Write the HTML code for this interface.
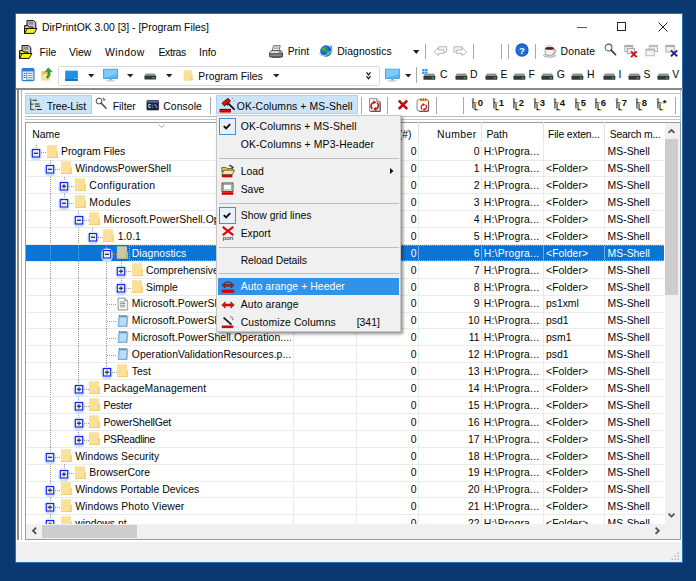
<!DOCTYPE html>
<html><head><meta charset="utf-8"><title>DirPrintOK 3.00 [3] - [Program Files]</title>
<style>
html,body{margin:0;padding:0}
body{width:696px;height:581px;overflow:hidden;background:#0a3871;position:relative;font-family:"Liberation Sans",sans-serif;font-size:10.4px;color:#050505}
.b{position:absolute;box-sizing:border-box}
.t{position:absolute;white-space:nowrap;line-height:16px;height:16px}
.w{color:#fff}
.sep{background:#a8a8a8;width:1px}
svg{overflow:visible}
</style></head><body>

<div class="b " style="left:15.0px;top:13.0px;width:668.4px;height:550.0px;background:#fff;border:1px solid #2f6fb3;"></div>
<svg class="b" style="left:23.8px;top:20.0px;" width="13.5" height="14.0" viewBox="0 0 13.500 14"><path d="M3 .600h6.600l2.200 2v6H3z" fill="#c6c6c6" stroke="#111" stroke-width="1"/><rect x="4.600" y="1.800" width="4.600" height="2.800" fill="#8c8c8c"/><path d="M.600 13.300V5.600h3.400l1 1.400h3.800v1.600H.600z" fill="#e2dc00" stroke="#111" stroke-width="1" stroke-linejoin="round"/><path d="M.600 13.400l2.700-4.900h9.600l-2.700 4.900z" fill="#fbf500" stroke="#111" stroke-width="1" stroke-linejoin="round"/></svg>
<span class="t " style="left:42.0px;top:20.2px;">DirPrintOK 3.00 [3] - [Program Files]</span>
<div class="b " style="left:577.0px;top:26.6px;width:9.5px;height:1.0px;background:#555"></div>
<div class="b " style="left:617.4px;top:22.0px;width:9.0px;height:9.0px;border:1px solid #222"></div>
<svg class="b" style="left:657.5px;top:21.5px;" width="10.0" height="10.0" viewBox="0 0 10 10"><path d="M.5.5l9 9M9.5.5l-9 9" stroke="#222" stroke-width="1"/></svg>
<svg class="b" style="left:18.6px;top:44.8px;" width="13.5" height="14.0" viewBox="0 0 13.500 14"><path d="M3 .600h6.600l2.200 2v6H3z" fill="#c6c6c6" stroke="#111" stroke-width="1"/><rect x="4.600" y="1.800" width="4.600" height="2.800" fill="#8c8c8c"/><path d="M.600 13.300V5.600h3.400l1 1.400h3.800v1.600H.600z" fill="#e2dc00" stroke="#111" stroke-width="1" stroke-linejoin="round"/><path d="M.600 13.400l2.700-4.900h9.600l-2.700 4.900z" fill="#fbf500" stroke="#111" stroke-width="1" stroke-linejoin="round"/></svg>
<span class="t " style="left:39.5px;top:44.7px;">File</span>
<span class="t " style="left:69.0px;top:44.7px;">View</span>
<span class="t " style="left:105.0px;top:44.7px;letter-spacing:0.45px;">Window</span>
<span class="t " style="left:158.5px;top:44.7px;letter-spacing:-0.35px;">Extras</span>
<span class="t " style="left:199.0px;top:44.7px;">Info</span>
<svg class="b" style="left:269.4px;top:44.5px;" width="14.0" height="14.0" viewBox="0 0 16 16"><path d="M5.200 .800h7.600l-1.400 5.600H3.800z" fill="#fff" stroke="#444" stroke-width=".900"/><path d="M6 2.400h5M5.600 4h5" stroke="#777" stroke-width=".800"/><path d="M2.600 6.400h11.200l1.600 2.400v2H.800v-2z" fill="#e4e4e4" stroke="#333" stroke-width=".900"/><path d="M.800 10h14.600v3.600H.800z" fill="#8a8a8a" stroke="#222" stroke-width=".900"/><path d="M3 13.600h10.500v1.200H3z" fill="#555"/><path d="M11 8.300h3" stroke="#444" stroke-width="1"/></svg>
<span class="t " style="left:287.7px;top:43.6px;">Print</span>
<svg class="b" style="left:319.4px;top:44.0px;" width="14.0" height="14.0" viewBox="0 0 16 16"><ellipse cx="8" cy="8.500" rx="7.800" ry="3" fill="none" stroke="#8fc4f5" stroke-width="1" transform="rotate(-25 8 8.500)"/><circle cx="8" cy="8" r="6.600" fill="#1a62c4"/><circle cx="6.600" cy="6.400" r="4" fill="#2a7be0" opacity=".700"/><path d="M3.200 4.600c1.800-1.800 3.800-1 4.800.4s-1 3-2.400 3S2.400 6 3.200 4.600zM9 8c2-1 3.800 0 3.800 1.800S11 13.400 9.600 12.600 8 9 9 8z" fill="#3fae3c"/><path d="M1 11.500Q8 16.500 15 7" stroke="#a8d4fa" stroke-width="1.100" fill="none"/><path d="M12.500 1.200l2.700 1.500-1 2.600z" fill="#3a86e8"/></svg>
<span class="t " style="left:337.3px;top:43.6px;letter-spacing:0.07px;">Diagnostics</span>
<svg class="b" style="left:413.0px;top:49.5px;" width="6.5" height="4.0" viewBox="0 0 8 5"><path d="M0 0h8L4 5z" fill="#222"/></svg>
<div class="b sep" style="left:425.0px;top:43.5px;width:1.0px;height:15.0px;"></div>
<div class="b sep" style="left:473.0px;top:43.5px;width:1.0px;height:15.0px;"></div>
<div class="b sep" style="left:500.6px;top:43.5px;width:1.0px;height:15.0px;"></div>
<div class="b sep" style="left:507.5px;top:43.5px;width:1.0px;height:15.0px;"></div>
<div class="b sep" style="left:534.8px;top:43.5px;width:1.0px;height:15.0px;"></div>
<svg class="b" style="left:432.5px;top:43.5px;" width="14.5" height="14.5" viewBox="0 0 16 16"><path d="M6 3h9v6H6z" fill="#f4f4f4" stroke="#aaa" stroke-width=".9"/><path d="M1 8.5L6 4v2.6h6v3.8H6V13z" fill="#fff" stroke="#aaa" stroke-width=".9"/></svg>
<svg class="b" style="left:453.0px;top:43.5px;" width="14.5" height="14.5" viewBox="0 0 16 16"><path d="M1 3h9v6H1z" fill="#f4f4f4" stroke="#aaa" stroke-width=".9"/><path d="M15 8.5L10 4v2.6H4v3.8h6V13z" fill="#fff" stroke="#aaa" stroke-width=".9"/></svg>
<svg class="b" style="left:515.0px;top:43.4px;" width="14.0" height="14.0" viewBox="0 0 16 16"><circle cx="8" cy="8" r="7.6" fill="#0f5fc2"/><circle cx="8" cy="8" r="6.3" fill="#1a6fd8"/><text x="8" y="12" text-anchor="middle" font-family="Liberation Sans, sans-serif" font-weight="bold" font-size="11" fill="#fff">?</text></svg>
<svg class="b" style="left:542.5px;top:43.5px;" width="14.0" height="14.0" viewBox="0 0 16 16"><ellipse cx="7.5" cy="13" rx="7" ry="2.2" fill="#d9d9d9" stroke="#888" stroke-width=".6"/><path d="M2.5 5h10v4.5q0 3.5-5 3.5t-5-3.5z" fill="#f1f1f1" stroke="#777" stroke-width=".7"/><ellipse cx="7.5" cy="5" rx="5" ry="1.7" fill="#5a1a12"/><path d="M12.5 6.2q3 0 2.4 2.2T12 10.6" fill="none" stroke="#888" stroke-width="1"/><path d="M6 3q-1-1 0-2M9 3q-1-1 0-2" stroke="#a33" stroke-width=".7" fill="none"/></svg>
<span class="t " style="left:560.6px;top:43.6px;letter-spacing:0.20px;">Donate</span>
<svg class="b" style="left:604.0px;top:42.5px;" width="13.0" height="13.0" viewBox="0 0 16 16"><circle cx="5.6" cy="5.6" r="4.2" fill="#fff" stroke="#555" stroke-width="1.3"/><path d="M8.8 8.8l5.4 5.4" stroke="#444" stroke-width="2.2" stroke-linecap="round"/></svg>
<svg class="b" style="left:624.0px;top:43.5px;" width="14.0" height="14.0" viewBox="0 0 16 16"><rect x="1" y="1.5" width="9" height="7" fill="#eee" stroke="#999" stroke-width=".9"/><rect x="1" y="1.5" width="9" height="2" fill="#aaa"/><rect x="4" y="5" width="8" height="6" fill="#eee" stroke="#999" stroke-width=".9"/><path d="M8 8.5l6.5 6.5M14.5 8.5L8 15" stroke="#d01010" stroke-width="2.2"/></svg>
<svg class="b" style="left:645.0px;top:43.5px;" width="13.5" height="13.5" viewBox="0 0 16 16"><rect x="5" y="1.5" width="10" height="7.5" fill="#eee" stroke="#a5a5a5" stroke-width=".9"/><rect x="5" y="1.5" width="10" height="2" fill="#bbb"/><rect x="1" y="6" width="10" height="8" fill="#f3f3f3" stroke="#a5a5a5" stroke-width=".9"/><rect x="1" y="6" width="10" height="2" fill="#bbb"/></svg>
<svg class="b" style="left:665.0px;top:43.5px;" width="13.5" height="13.5" viewBox="0 0 16 16"><rect x="1" y="1.5" width="10" height="8" fill="#eee" stroke="#999" stroke-width=".9"/><rect x="1" y="1.5" width="10" height="2" fill="#aaa"/><path d="M7 7.5l7.5 7M14.5 7.5L7 14.5" stroke="#2a1a8a" stroke-width="2.2"/></svg>
<svg class="b" style="left:21.0px;top:68.0px;" width="14.0" height="13.2" viewBox="0 0 16 16"><rect x=".800" y=".800" width="14.400" height="14.400" rx="1.600" fill="#fff" stroke="#2b7cd3" stroke-width="1.500"/><rect x=".800" y=".800" width="14.400" height="3.400" rx="1" fill="#2b7cd3"/><path d="M6.600 4v11" stroke="#2b7cd3" stroke-width="1.100"/><path d="M2.600 6.500h2.600M2.600 9h2.600M2.600 11.500h2.600" stroke="#555" stroke-width="1.200"/><path d="M8.200 6.500h5.400M8.200 9h5.400M8.200 11.500h5.400" stroke="#8a8a8a" stroke-width="1.300"/><path d="M8.200 13.600h5.400" stroke="#4a90dc" stroke-width="1"/></svg>
<svg class="b" style="left:41.2px;top:67.3px;" width="12.5" height="14.2" viewBox="0 0 16 16"><path d="M.800 4.500h5.500l1 1.400h4.200V16H.800z" fill="#e8c050"/><path d="M.800 16l1.400-8h10.600l-1.300 8z" fill="#f6dc8c"/><path d="M3.500 9.500h4M3.300 11.500h4M3 13.500h4" stroke="#fff" stroke-width=".800"/><path d="M9.200 0l5.200 5h-2.800q.800 5-3 8.500l-1.800-1.600q3-3 2.200-6.900H5.400z" fill="#27a838" stroke="#177026" stroke-width=".600"/></svg>
<div class="b " style="left:58.3px;top:66.0px;width:322.0px;height:19.5px;border:1px solid #d9d9d9;border-radius:2px;background:#fff"></div>
<svg class="b" style="left:64.3px;top:68.5px;" width="15.0" height="13.5" viewBox="0 0 16 16"><rect x=".5" y="2" width="15" height="12" fill="#1e8fea"/><rect x=".5" y="12.2" width="15" height="1.8" fill="#1565b0"/><rect x="11" y="10.6" width="3" height="1.2" fill="#7fc4ff"/></svg>
<svg class="b" style="left:87.6px;top:74.0px;" width="6.5" height="3.6" viewBox="0 0 8 4.500"><path d="M0 0h8L4 4.500z" fill="#222"/></svg>
<svg class="b" style="left:103.3px;top:67.5px;" width="15.0" height="15.0" viewBox="0 0 16 16"><rect x=".7" y="1.2" width="14.6" height="10" fill="#57b6f5" stroke="#2a8ad4" stroke-width=".8"/><path d="M1.2 1.6h13.6v5L1.2 10.6z" fill="#7ccaf9"/><rect x="6.7" y="11.2" width="2.6" height="2" fill="#9aa4ad"/><rect x="3.5" y="13.2" width="9" height="1.1" fill="#b7bec5"/></svg>
<svg class="b" style="left:126.7px;top:74.0px;" width="6.5" height="3.6" viewBox="0 0 8 4.500"><path d="M0 0h8L4 4.500z" fill="#222"/></svg>
<svg class="b" style="left:144.0px;top:67.5px;" width="12.5" height="12.5" viewBox="0 0 16 16"><path d="M2.4 6.6h11.2l1.8 3.6H.6z" fill="#b9bcc0"/><path d="M2 7.6h12l1.4 2.6H.6z" fill="#8d9196"/><rect x=".6" y="10" width="14.8" height="4.6" rx=".6" fill="#34373b"/><rect x="11" y="11.8" width="2.4" height="1.4" fill="#3fe052"/></svg>
<svg class="b" style="left:166.0px;top:74.0px;" width="6.5" height="3.6" viewBox="0 0 8 4.500"><path d="M0 0h8L4 4.500z" fill="#222"/></svg>
<svg class="b" style="left:183.2px;top:68.0px;" width="11.8" height="14.4" viewBox="0 0 16 16"><path d="M1 1.2h10.2q.8 0 .8.8V15H1z" fill="#fbe09a"/><path d="M10.6 8.6l2.6-1.6V15h-2.6z" fill="#f6d67e"/><path d="M1 14.2h12.2V15H1z" fill="#f0c968"/></svg>
<span class="t " style="left:198.3px;top:68.6px;letter-spacing:-0.03px;">Program Files</span>
<svg class="b" style="left:273.3px;top:74.0px;" width="6.5" height="3.6" viewBox="0 0 8 4.500"><path d="M0 0h8L4 4.500z" fill="#222"/></svg>
<svg class="b" style="left:366.4px;top:72.0px;" width="5.0" height="7.6" viewBox="0 0 6 9"><path d="M.5.500L3 3.500 5.500.500M.500 5L3 8 5.500 5" fill="none" stroke="#222" stroke-width="1.500"/></svg>
<svg class="b" style="left:384.7px;top:67.5px;" width="15.0" height="15.0" viewBox="0 0 16 16"><rect x=".7" y="1.2" width="14.6" height="10" fill="#57b6f5" stroke="#2a8ad4" stroke-width=".8"/><path d="M1.2 1.6h13.6v5L1.2 10.6z" fill="#7ccaf9"/><rect x="6.7" y="11.2" width="2.6" height="2" fill="#9aa4ad"/><rect x="3.5" y="13.2" width="9" height="1.1" fill="#b7bec5"/></svg>
<svg class="b" style="left:404.5px;top:74.0px;" width="6.5" height="3.6" viewBox="0 0 8 4.500"><path d="M0 0h8L4 4.500z" fill="#222"/></svg>
<div class="b sep" style="left:416.3px;top:67.0px;width:1.0px;height:16.0px;"></div>
<svg class="b" style="left:423.0px;top:68.3px;" width="12.8" height="12.8" viewBox="0 0 16 16"><path d="M-.8 1.4h2.8v2.6H-.8zM2.8 1.4h2.8v2.6H2.800zM-.8 4.800h2.800v2.600H-.800zM2.800 4.800h2.800v2.600H2.800z" fill="#1e90ff"/><path d="M2.4 6.6h11.2l1.8 3.6H.6z" fill="#b9bcc0"/><path d="M2 7.6h12l1.4 2.6H.6z" fill="#8d9196"/><rect x=".6" y="10" width="14.8" height="4.6" rx=".6" fill="#34373b"/><rect x="11" y="11.8" width="2.4" height="1.4" fill="#3fe052"/></svg>
<span class="t " style="left:440.0px;top:66.8px;">C</span>
<svg class="b" style="left:454.6px;top:68.3px;" width="12.8" height="12.8" viewBox="0 0 16 16"><path d="M2.4 6.6h11.2l1.8 3.6H.6z" fill="#b9bcc0"/><path d="M2 7.6h12l1.4 2.6H.6z" fill="#8d9196"/><rect x=".6" y="10" width="14.8" height="4.6" rx=".6" fill="#34373b"/><rect x="11" y="11.8" width="2.4" height="1.4" fill="#3fe052"/></svg>
<span class="t " style="left:470.0px;top:66.8px;">D</span>
<svg class="b" style="left:484.8px;top:68.3px;" width="12.8" height="12.8" viewBox="0 0 16 16"><path d="M2.4 6.6h11.2l1.8 3.6H.6z" fill="#b9bcc0"/><path d="M2 7.6h12l1.4 2.6H.6z" fill="#8d9196"/><rect x=".6" y="10" width="14.8" height="4.6" rx=".6" fill="#34373b"/><rect x="11" y="11.8" width="2.4" height="1.4" fill="#3fe052"/></svg>
<span class="t " style="left:500.6px;top:66.8px;">E</span>
<svg class="b" style="left:512.8px;top:68.3px;" width="12.8" height="12.8" viewBox="0 0 16 16"><path d="M2.4 6.6h11.2l1.8 3.6H.6z" fill="#b9bcc0"/><path d="M2 7.6h12l1.4 2.6H.6z" fill="#8d9196"/><rect x=".6" y="10" width="14.8" height="4.6" rx=".6" fill="#34373b"/><rect x="11" y="11.8" width="2.4" height="1.4" fill="#3fe052"/></svg>
<span class="t " style="left:528.6px;top:66.8px;">F</span>
<svg class="b" style="left:541.0px;top:68.3px;" width="12.8" height="12.8" viewBox="0 0 16 16"><path d="M2.4 6.6h11.2l1.8 3.6H.6z" fill="#b9bcc0"/><path d="M2 7.6h12l1.4 2.6H.6z" fill="#8d9196"/><rect x=".6" y="10" width="14.8" height="4.6" rx=".6" fill="#34373b"/><rect x="11" y="11.8" width="2.4" height="1.4" fill="#3fe052"/></svg>
<span class="t " style="left:556.8px;top:66.8px;">G</span>
<svg class="b" style="left:571.3px;top:68.3px;" width="12.8" height="12.8" viewBox="0 0 16 16"><path d="M2.4 6.6h11.2l1.8 3.6H.6z" fill="#b9bcc0"/><path d="M2 7.6h12l1.4 2.6H.6z" fill="#8d9196"/><rect x=".6" y="10" width="14.8" height="4.6" rx=".6" fill="#34373b"/><rect x="11" y="11.8" width="2.4" height="1.4" fill="#3fe052"/></svg>
<span class="t " style="left:587.0px;top:66.8px;">H</span>
<svg class="b" style="left:602.7px;top:68.3px;" width="12.8" height="12.8" viewBox="0 0 16 16"><path d="M2.4 6.6h11.2l1.8 3.6H.6z" fill="#b9bcc0"/><path d="M2 7.6h12l1.4 2.6H.6z" fill="#8d9196"/><rect x=".6" y="10" width="14.8" height="4.6" rx=".6" fill="#34373b"/><rect x="11" y="11.8" width="2.4" height="1.4" fill="#3fe052"/></svg>
<span class="t " style="left:618.5px;top:66.8px;">I</span>
<svg class="b" style="left:628.0px;top:68.3px;" width="12.8" height="12.8" viewBox="0 0 16 16"><path d="M2.4 6.6h11.2l1.8 3.6H.6z" fill="#b9bcc0"/><path d="M2 7.6h12l1.4 2.6H.6z" fill="#8d9196"/><rect x=".6" y="10" width="14.8" height="4.6" rx=".6" fill="#34373b"/><rect x="11" y="11.8" width="2.4" height="1.4" fill="#3fe052"/></svg>
<span class="t " style="left:643.6px;top:66.8px;">S</span>
<svg class="b" style="left:656.5px;top:68.3px;" width="12.8" height="12.8" viewBox="0 0 16 16"><path d="M2.4 6.6h11.2l1.8 3.6H.6z" fill="#b9bcc0"/><path d="M2 7.6h12l1.4 2.6H.6z" fill="#8d9196"/><rect x=".6" y="10" width="14.8" height="4.6" rx=".6" fill="#34373b"/><rect x="11" y="11.8" width="2.4" height="1.4" fill="#3fe052"/></svg>
<span class="t " style="left:672.3px;top:66.8px;">V</span>
<div class="b " style="left:16.0px;top:87.5px;width:666.0px;height:454.0px;background:#fff"></div>
<div class="b " style="left:16.0px;top:88.4px;width:666.5px;height:1.9px;background:#8a8a8a"></div>
<div class="b " style="left:17.3px;top:90.0px;width:1.3px;height:450.0px;background:#8c8c8c"></div>
<div class="b " style="left:20.8px;top:90.3px;width:1.2px;height:449.7px;background:#b4b4b4"></div>
<div class="b " style="left:680.3px;top:90.3px;width:1.0px;height:450.0px;background:#c2c2c2"></div>
<div class="b " style="left:25.0px;top:92.7px;width:655.5px;height:1.0px;background:#c4c4c4"></div>
<div class="b " style="left:25.0px;top:115.9px;width:655.5px;height:1.0px;background:#b8b8b8"></div>
<div class="b " style="left:25.0px;top:118.9px;width:655.5px;height:1.0px;background:#c8c8c8"></div>
<div class="b " style="left:25.0px;top:94.6px;width:67.0px;height:19.6px;background:#cce4f7;border:1px solid #a9d1f1"></div>
<svg class="b" style="left:29.0px;top:98.0px;" width="13.5" height="13.5" viewBox="0 0 16 16"><path d="M2 1.800v12M2 7.300h3M2 13.800h3.500" stroke="#222" stroke-width="1.100" fill="none"/><path d="M4.300 2.600h5.200M7.200 7.200h5.300M7.200 9.900h6M9.300 13.700h6" stroke="#222" stroke-width="1.200"/><circle cx="2" cy="1.800" r="1.200" fill="#ddd" stroke="#333" stroke-width=".500"/><circle cx="5.600" cy="7.200" r="1.150" fill="#d8b400"/><circle cx="7.200" cy="13.600" r="1.150" fill="#d8b400"/></svg>
<span class="t " style="left:46.7px;top:99.1px;letter-spacing:-0.16px;">Tree-List</span>
<svg class="b" style="left:95.0px;top:97.0px;" width="13.0" height="13.0" viewBox="0 0 16 16"><circle cx="5" cy="5" r="3.6" fill="#fff" stroke="#444" stroke-width="1.2"/><path d="M7.6 7.6l6 6.2" stroke="#555" stroke-width="2" stroke-linecap="round"/><path d="M10.5 1l.5 3M12.5 2.5l-1.5 2" stroke="#d01010" stroke-width="1.2"/></svg>
<span class="t " style="left:112.7px;top:99.1px;">Filter</span>
<svg class="b" style="left:146.0px;top:98.5px;" width="13.5" height="12.5" viewBox="0 0 16 16"><rect x=".5" y="2" width="15" height="12" rx=".8" fill="#1b2540" stroke="#0b1020" stroke-width=".8"/><rect x=".9" y="2.4" width="14.2" height="2.2" fill="#4b6fb8"/><text x="2" y="11.6" font-family="Liberation Mono, monospace" font-weight="bold" font-size="6.5" fill="#fff">C:\</text></svg>
<span class="t " style="left:163.3px;top:99.1px;letter-spacing:0.06px;">Console</span>
<div class="b sep" style="left:210.0px;top:96.5px;width:1.0px;height:17.0px;"></div>
<div class="b " style="left:216.0px;top:94.6px;width:141.5px;height:19.6px;background:#cce4f7;border:1px solid #a9d1f1"></div>
<svg class="b" style="left:218.6px;top:97.0px;" width="16.0" height="16.0" viewBox="0 0 16 16"><path d="M10 7.200l5 5" stroke="#111" stroke-width="1.800" stroke-linecap="round"/><g transform="rotate(-38 7.500 5.500)"><rect x="3.600" y="3.200" width="7.800" height="3.800" rx=".600" fill="#d21414" stroke="#3a0505" stroke-width=".800"/><rect x="6.500" y="6.800" width="2.200" height="1.600" fill="#b01010" stroke="#3a0505" stroke-width=".600"/></g><path d="M13.200 1.800l.6-.9M14.700 4.200l1-.3" stroke="#c33" stroke-width=".700"/><rect x=".600" y="12.400" width="11.400" height="3.200" fill="#e01010"/><path d="M.600 12.400h11.400" stroke="#111" stroke-width=".900"/><path d="M.600 14.300h11.400" stroke="#500" stroke-width=".900" stroke-dasharray="1.600 1.200"/></svg>
<span class="t " style="left:236.7px;top:99.1px;letter-spacing:0.12px;">OK-Columns + MS-Shell</span>
<div class="b sep" style="left:360.7px;top:96.5px;width:1.0px;height:17.0px;"></div>
<svg class="b" style="left:368.0px;top:97.5px;" width="14.0" height="14.0" viewBox="0 0 16 16"><path d="M2.600 1.400h8.200l3.600 3.400v10.800H2.600z" fill="#222"/><path d="M1.800.800h8.200l3.600 3.400v10.600H1.800z" fill="#fff" stroke="#555" stroke-width=".800"/><path d="M10 .800v3.400h3.600" fill="#ddd" stroke="#555" stroke-width=".700"/><g transform="translate(-.300 .300)"><path d="M5.300 12C3 10 3.200 5.800 6.800 4.600" stroke="#c4200c" stroke-width="2" fill="none"/><path d="M6.200 2.200l3.800 2.400-3.600 2.600z" fill="#c4200c"/><path d="M10.700 5C13 7 12.800 11.200 9.200 12.400" stroke="#c4200c" stroke-width="2" fill="none"/><path d="M9.800 14.800L6 12.400l3.600-2.600z" fill="#c4200c"/></g></svg>
<div class="b sep" style="left:387.4px;top:96.5px;width:1.0px;height:17.0px;"></div>
<svg class="b" style="left:396.6px;top:99.0px;" width="12.0" height="11.5" viewBox="0 0 16 16"><path d="M2.300 2.300l11.400 11.400M13.700 2.300L2.300 13.700" stroke="#6a0000" stroke-width="3.400" stroke-linecap="butt"/><path d="M2.300 2.300l11.400 11.400M13.700 2.300L2.300 13.700" stroke="#e00808" stroke-width="2.400" stroke-linecap="butt"/></svg>
<svg class="b" style="left:416.0px;top:97.5px;" width="14.0" height="14.0" viewBox="0 0 16 16"><path d="M4 2.600h9q2 0 2 2v9q0 2-2 2H5q-2 0-2-2z" fill="#222"/><path d="M3.200 1.800h9q2 0 2 2v9q0 2-2 2h-9q-2 0-2-2v-9q0-2 2-2z" fill="#fff" stroke="#555" stroke-width=".800"/><path d="M3.500 .600h9v3.200h-9z" fill="#e9c53c"/><path d="M5 .800l1.800 2M9 .600l-1 2.400" stroke="#2a50c8" stroke-width="1.200"/><circle cx="11" cy="1.800" r="1" fill="#d01010"/><g transform="translate(3.200 4.200) scale(.720)"><path d="M5.300 12C3 10 3.200 5.800 6.800 4.600" stroke="#e61010" stroke-width="2" fill="none"/><path d="M6.200 2.200l3.800 2.400-3.600 2.600z" fill="#e61010"/><path d="M10.700 5C13 7 12.800 11.200 9.200 12.400" stroke="#e61010" stroke-width="2" fill="none"/><path d="M9.800 14.800L6 12.400l3.600-2.600z" fill="#e61010"/></g></svg>
<div class="b sep" style="left:435.7px;top:96.5px;width:1.0px;height:17.0px;"></div>
<div class="b sep" style="left:463.3px;top:96.5px;width:1.0px;height:17.0px;"></div>
<svg class="b" style="left:471.3px;top:98.0px;" width="14.0" height="14.0" viewBox="0 0 16 16"><path d="M2.200 1.500v10.500M2.200 5.500h3M4.600 6.500v6.800h2.400" stroke="#222" stroke-width="1.200" fill="none"/><circle cx="2.200" cy="1.500" r="1.100" fill="#ccc" stroke="#333" stroke-width=".500"/><circle cx="5.800" cy="5.600" r="1.100" fill="#d8b400"/><circle cx="7.600" cy="13.400" r="1.100" fill="#d8b400"/><text x="7.800" y="9.600" font-family="Liberation Sans, sans-serif" font-weight="bold" font-size="10.800" fill="#111">0</text></svg>
<svg class="b" style="left:491.8px;top:98.0px;" width="14.0" height="14.0" viewBox="0 0 16 16"><path d="M2.200 1.500v10.500M2.200 5.500h3M4.600 6.500v6.800h2.400" stroke="#222" stroke-width="1.200" fill="none"/><circle cx="2.200" cy="1.500" r="1.100" fill="#ccc" stroke="#333" stroke-width=".500"/><circle cx="5.800" cy="5.600" r="1.100" fill="#d8b400"/><circle cx="7.600" cy="13.400" r="1.100" fill="#d8b400"/><text x="7.800" y="9.600" font-family="Liberation Sans, sans-serif" font-weight="bold" font-size="10.800" fill="#111">1</text></svg>
<svg class="b" style="left:512.3px;top:98.0px;" width="14.0" height="14.0" viewBox="0 0 16 16"><path d="M2.200 1.500v10.500M2.200 5.500h3M4.600 6.500v6.800h2.400" stroke="#222" stroke-width="1.200" fill="none"/><circle cx="2.200" cy="1.500" r="1.100" fill="#ccc" stroke="#333" stroke-width=".500"/><circle cx="5.800" cy="5.600" r="1.100" fill="#d8b400"/><circle cx="7.600" cy="13.400" r="1.100" fill="#d8b400"/><text x="7.800" y="9.600" font-family="Liberation Sans, sans-serif" font-weight="bold" font-size="10.800" fill="#111">2</text></svg>
<svg class="b" style="left:532.8px;top:98.0px;" width="14.0" height="14.0" viewBox="0 0 16 16"><path d="M2.200 1.500v10.500M2.200 5.500h3M4.600 6.500v6.800h2.400" stroke="#222" stroke-width="1.200" fill="none"/><circle cx="2.200" cy="1.500" r="1.100" fill="#ccc" stroke="#333" stroke-width=".500"/><circle cx="5.800" cy="5.600" r="1.100" fill="#d8b400"/><circle cx="7.600" cy="13.400" r="1.100" fill="#d8b400"/><text x="7.800" y="9.600" font-family="Liberation Sans, sans-serif" font-weight="bold" font-size="10.800" fill="#111">3</text></svg>
<svg class="b" style="left:553.3px;top:98.0px;" width="14.0" height="14.0" viewBox="0 0 16 16"><path d="M2.200 1.500v10.500M2.200 5.500h3M4.600 6.500v6.800h2.400" stroke="#222" stroke-width="1.200" fill="none"/><circle cx="2.200" cy="1.500" r="1.100" fill="#ccc" stroke="#333" stroke-width=".500"/><circle cx="5.800" cy="5.600" r="1.100" fill="#d8b400"/><circle cx="7.600" cy="13.400" r="1.100" fill="#d8b400"/><text x="7.800" y="9.600" font-family="Liberation Sans, sans-serif" font-weight="bold" font-size="10.800" fill="#111">4</text></svg>
<svg class="b" style="left:573.8px;top:98.0px;" width="14.0" height="14.0" viewBox="0 0 16 16"><path d="M2.200 1.500v10.500M2.200 5.500h3M4.600 6.500v6.800h2.400" stroke="#222" stroke-width="1.200" fill="none"/><circle cx="2.200" cy="1.500" r="1.100" fill="#ccc" stroke="#333" stroke-width=".500"/><circle cx="5.800" cy="5.600" r="1.100" fill="#d8b400"/><circle cx="7.600" cy="13.400" r="1.100" fill="#d8b400"/><text x="7.800" y="9.600" font-family="Liberation Sans, sans-serif" font-weight="bold" font-size="10.800" fill="#111">5</text></svg>
<svg class="b" style="left:594.3px;top:98.0px;" width="14.0" height="14.0" viewBox="0 0 16 16"><path d="M2.200 1.500v10.500M2.200 5.500h3M4.600 6.500v6.800h2.400" stroke="#222" stroke-width="1.200" fill="none"/><circle cx="2.200" cy="1.500" r="1.100" fill="#ccc" stroke="#333" stroke-width=".500"/><circle cx="5.800" cy="5.600" r="1.100" fill="#d8b400"/><circle cx="7.600" cy="13.400" r="1.100" fill="#d8b400"/><text x="7.800" y="9.600" font-family="Liberation Sans, sans-serif" font-weight="bold" font-size="10.800" fill="#111">6</text></svg>
<svg class="b" style="left:614.8px;top:98.0px;" width="14.0" height="14.0" viewBox="0 0 16 16"><path d="M2.200 1.500v10.500M2.200 5.500h3M4.600 6.500v6.800h2.400" stroke="#222" stroke-width="1.200" fill="none"/><circle cx="2.200" cy="1.500" r="1.100" fill="#ccc" stroke="#333" stroke-width=".500"/><circle cx="5.800" cy="5.600" r="1.100" fill="#d8b400"/><circle cx="7.600" cy="13.400" r="1.100" fill="#d8b400"/><text x="7.800" y="9.600" font-family="Liberation Sans, sans-serif" font-weight="bold" font-size="10.800" fill="#111">7</text></svg>
<svg class="b" style="left:635.3px;top:98.0px;" width="14.0" height="14.0" viewBox="0 0 16 16"><path d="M2.200 1.500v10.500M2.200 5.500h3M4.600 6.500v6.800h2.400" stroke="#222" stroke-width="1.200" fill="none"/><circle cx="2.200" cy="1.500" r="1.100" fill="#ccc" stroke="#333" stroke-width=".500"/><circle cx="5.800" cy="5.600" r="1.100" fill="#d8b400"/><circle cx="7.600" cy="13.400" r="1.100" fill="#d8b400"/><text x="7.800" y="9.600" font-family="Liberation Sans, sans-serif" font-weight="bold" font-size="10.800" fill="#111">8</text></svg>
<svg class="b" style="left:655.8px;top:98.0px;" width="14.0" height="14.0" viewBox="0 0 16 16"><path d="M2.200 1.500v10.500M2.200 5.500h3M4.600 6.500v6.800h2.400" stroke="#222" stroke-width="1.200" fill="none"/><circle cx="2.200" cy="1.500" r="1.100" fill="#ccc" stroke="#333" stroke-width=".500"/><circle cx="5.800" cy="5.600" r="1.100" fill="#d8b400"/><circle cx="7.600" cy="13.400" r="1.100" fill="#d8b400"/><text x="7.800" y="9.600" font-family="Liberation Sans, sans-serif" font-weight="bold" font-size="10.800" fill="#111">*</text></svg>
<div class="b sep" style="left:674.5px;top:96.5px;width:1.0px;height:17.0px;"></div>
<div class="b " style="left:25.0px;top:121.6px;width:656.3px;height:418.7px;border:1px solid #9c9c9c;background:#fff"></div>
<div class="b " style="left:293.0px;top:122.0px;width:1.0px;height:21.0px;background:#e2e2e2"></div>
<div class="b " style="left:356.0px;top:122.0px;width:1.0px;height:21.0px;background:#e2e2e2"></div>
<div class="b " style="left:418.0px;top:122.0px;width:1.0px;height:21.0px;background:#e2e2e2"></div>
<div class="b " style="left:481.0px;top:122.0px;width:1.0px;height:21.0px;background:#e2e2e2"></div>
<div class="b " style="left:542.6px;top:122.0px;width:1.0px;height:21.0px;background:#e2e2e2"></div>
<div class="b " style="left:604.3px;top:122.0px;width:1.0px;height:21.0px;background:#e2e2e2"></div>
<span class="t " style="left:32.3px;top:127.2px;">Name</span>
<svg class="b" style="left:157.5px;top:123.5px;" width="7.0" height="4.0" viewBox="0 0 8 4.500"><path d="M.5.500L4 4l3.500-3.500" fill="none" stroke="#999" stroke-width="1"/></svg>
<span class="t " style="left:398.8px;top:127.2px;">(#)</span>
<span class="t " style="left:437.0px;top:127.2px;letter-spacing:0.43px;">Number</span>
<span class="t " style="left:486.4px;top:127.2px;">Path</span>
<span class="t " style="left:548.0px;top:127.2px;letter-spacing:-0.16px;">File exten...</span>
<span class="t " style="left:609.8px;top:127.2px;letter-spacing:-0.23px;">Search m...</span>
<div class="b" style="left:26px;top:143.5px;width:638px;height:380.5px;overflow:hidden">
<div class="b " style="left:0.0px;top:16.0px;width:638.0px;height:1.0px;background:#ebebeb"></div>
<div class="b " style="left:0.0px;top:32.9px;width:638.0px;height:1.0px;background:#ebebeb"></div>
<div class="b " style="left:0.0px;top:49.8px;width:638.0px;height:1.0px;background:#ebebeb"></div>
<div class="b " style="left:0.0px;top:66.7px;width:638.0px;height:1.0px;background:#ebebeb"></div>
<div class="b " style="left:0.0px;top:83.6px;width:638.0px;height:1.0px;background:#ebebeb"></div>
<div class="b " style="left:0.0px;top:100.5px;width:638.0px;height:1.0px;background:#ebebeb"></div>
<div class="b " style="left:0.0px;top:117.4px;width:638.0px;height:1.0px;background:#ebebeb"></div>
<div class="b " style="left:0.0px;top:134.3px;width:638.0px;height:1.0px;background:#ebebeb"></div>
<div class="b " style="left:0.0px;top:151.2px;width:638.0px;height:1.0px;background:#ebebeb"></div>
<div class="b " style="left:0.0px;top:168.1px;width:638.0px;height:1.0px;background:#ebebeb"></div>
<div class="b " style="left:0.0px;top:184.9px;width:638.0px;height:1.0px;background:#ebebeb"></div>
<div class="b " style="left:0.0px;top:201.8px;width:638.0px;height:1.0px;background:#ebebeb"></div>
<div class="b " style="left:0.0px;top:218.7px;width:638.0px;height:1.0px;background:#ebebeb"></div>
<div class="b " style="left:0.0px;top:235.6px;width:638.0px;height:1.0px;background:#ebebeb"></div>
<div class="b " style="left:0.0px;top:252.5px;width:638.0px;height:1.0px;background:#ebebeb"></div>
<div class="b " style="left:0.0px;top:269.4px;width:638.0px;height:1.0px;background:#ebebeb"></div>
<div class="b " style="left:0.0px;top:286.3px;width:638.0px;height:1.0px;background:#ebebeb"></div>
<div class="b " style="left:0.0px;top:303.2px;width:638.0px;height:1.0px;background:#ebebeb"></div>
<div class="b " style="left:0.0px;top:320.1px;width:638.0px;height:1.0px;background:#ebebeb"></div>
<div class="b " style="left:0.0px;top:337.0px;width:638.0px;height:1.0px;background:#ebebeb"></div>
<div class="b " style="left:0.0px;top:353.9px;width:638.0px;height:1.0px;background:#ebebeb"></div>
<div class="b " style="left:0.0px;top:370.8px;width:638.0px;height:1.0px;background:#ebebeb"></div>
<div class="b " style="left:0.0px;top:387.7px;width:638.0px;height:1.0px;background:#ebebeb"></div>
<div class="b " style="left:267.0px;top:-0.5px;width:1.0px;height:381.0px;background:#ebebeb"></div>
<div class="b " style="left:330.0px;top:-0.5px;width:1.0px;height:381.0px;background:#ebebeb"></div>
<div class="b " style="left:392.0px;top:-0.5px;width:1.0px;height:381.0px;background:#ebebeb"></div>
<div class="b " style="left:455.0px;top:-0.5px;width:1.0px;height:381.0px;background:#ebebeb"></div>
<div class="b " style="left:516.6px;top:-0.5px;width:1.0px;height:381.0px;background:#ebebeb"></div>
<div class="b " style="left:578.3px;top:-0.5px;width:1.0px;height:381.0px;background:#ebebeb"></div>
<div class="b " style="left:0.0px;top:101.4px;width:638.0px;height:16.6px;background:#0b74d4"></div>
<div class="b " style="left:103.0px;top:101.4px;width:535.0px;height:16.6px;border:1px dotted #e0a868;border-right:none"></div>
<div class="b " style="left:267.0px;top:102.4px;width:1.0px;height:14.6px;background:rgba(255,255,255,.4)"></div>
<div class="b " style="left:330.0px;top:102.4px;width:1.0px;height:14.6px;background:rgba(255,255,255,.4)"></div>
<div class="b " style="left:392.0px;top:102.4px;width:1.0px;height:14.6px;background:rgba(255,255,255,.4)"></div>
<div class="b " style="left:455.0px;top:102.4px;width:1.0px;height:14.6px;background:rgba(255,255,255,.4)"></div>
<div class="b " style="left:516.6px;top:102.4px;width:1.0px;height:14.6px;background:rgba(255,255,255,.4)"></div>
<div class="b " style="left:578.3px;top:102.4px;width:1.0px;height:14.6px;background:rgba(255,255,255,.4)"></div>
<div class="b " style="left:9.5px;top:-0.4px;width:1.0px;height:5.2px;background:repeating-linear-gradient(#9c9c9c 0 1px,transparent 1px 2px)"></div>
<div class="b " style="left:23.7px;top:16.5px;width:1.0px;height:5.2px;background:repeating-linear-gradient(#9c9c9c 0 1px,transparent 1px 2px)"></div>
<div class="b " style="left:23.7px;top:30.7px;width:1.0px;height:2.6px;background:repeating-linear-gradient(#9c9c9c 0 1px,transparent 1px 2px)"></div>
<div class="b " style="left:37.8px;top:33.4px;width:1.0px;height:5.2px;background:repeating-linear-gradient(#9c9c9c 0 1px,transparent 1px 2px)"></div>
<div class="b " style="left:37.8px;top:47.6px;width:1.0px;height:2.6px;background:repeating-linear-gradient(#9c9c9c 0 1px,transparent 1px 2px)"></div>
<div class="b " style="left:23.7px;top:33.4px;width:1.0px;height:16.9px;background:repeating-linear-gradient(#9c9c9c 0 1px,transparent 1px 2px)"></div>
<div class="b " style="left:37.8px;top:50.3px;width:1.0px;height:5.2px;background:repeating-linear-gradient(#9c9c9c 0 1px,transparent 1px 2px)"></div>
<div class="b " style="left:23.7px;top:50.3px;width:1.0px;height:16.9px;background:repeating-linear-gradient(#9c9c9c 0 1px,transparent 1px 2px)"></div>
<div class="b " style="left:52.0px;top:67.2px;width:1.0px;height:5.2px;background:repeating-linear-gradient(#9c9c9c 0 1px,transparent 1px 2px)"></div>
<div class="b " style="left:52.0px;top:81.4px;width:1.0px;height:2.6px;background:repeating-linear-gradient(#9c9c9c 0 1px,transparent 1px 2px)"></div>
<div class="b " style="left:23.7px;top:67.2px;width:1.0px;height:16.9px;background:repeating-linear-gradient(#9c9c9c 0 1px,transparent 1px 2px)"></div>
<div class="b " style="left:66.2px;top:84.1px;width:1.0px;height:5.2px;background:repeating-linear-gradient(#9c9c9c 0 1px,transparent 1px 2px)"></div>
<div class="b " style="left:52.0px;top:84.1px;width:1.0px;height:16.9px;background:repeating-linear-gradient(#9c9c9c 0 1px,transparent 1px 2px)"></div>
<div class="b " style="left:23.7px;top:84.1px;width:1.0px;height:16.9px;background:repeating-linear-gradient(#9c9c9c 0 1px,transparent 1px 2px)"></div>
<div class="b " style="left:80.3px;top:101.0px;width:1.0px;height:5.2px;background:repeating-linear-gradient(#9c9c9c 0 1px,transparent 1px 2px)"></div>
<div class="b " style="left:80.3px;top:115.2px;width:1.0px;height:2.6px;background:repeating-linear-gradient(#9c9c9c 0 1px,transparent 1px 2px)"></div>
<div class="b " style="left:52.0px;top:101.0px;width:1.0px;height:16.9px;background:repeating-linear-gradient(#9c9c9c 0 1px,transparent 1px 2px)"></div>
<div class="b " style="left:23.7px;top:101.0px;width:1.0px;height:16.9px;background:repeating-linear-gradient(#9c9c9c 0 1px,transparent 1px 2px)"></div>
<div class="b " style="left:94.5px;top:117.9px;width:1.0px;height:5.2px;background:repeating-linear-gradient(#9c9c9c 0 1px,transparent 1px 2px)"></div>
<div class="b " style="left:94.5px;top:132.1px;width:1.0px;height:2.6px;background:repeating-linear-gradient(#9c9c9c 0 1px,transparent 1px 2px)"></div>
<div class="b " style="left:80.3px;top:117.9px;width:1.0px;height:16.9px;background:repeating-linear-gradient(#9c9c9c 0 1px,transparent 1px 2px)"></div>
<div class="b " style="left:52.0px;top:117.9px;width:1.0px;height:16.9px;background:repeating-linear-gradient(#9c9c9c 0 1px,transparent 1px 2px)"></div>
<div class="b " style="left:23.7px;top:117.9px;width:1.0px;height:16.9px;background:repeating-linear-gradient(#9c9c9c 0 1px,transparent 1px 2px)"></div>
<div class="b " style="left:94.5px;top:134.8px;width:1.0px;height:5.2px;background:repeating-linear-gradient(#9c9c9c 0 1px,transparent 1px 2px)"></div>
<div class="b " style="left:80.3px;top:134.8px;width:1.0px;height:16.9px;background:repeating-linear-gradient(#9c9c9c 0 1px,transparent 1px 2px)"></div>
<div class="b " style="left:52.0px;top:134.8px;width:1.0px;height:16.9px;background:repeating-linear-gradient(#9c9c9c 0 1px,transparent 1px 2px)"></div>
<div class="b " style="left:23.7px;top:134.8px;width:1.0px;height:16.9px;background:repeating-linear-gradient(#9c9c9c 0 1px,transparent 1px 2px)"></div>
<div class="b " style="left:80.3px;top:151.7px;width:1.0px;height:9.7px;background:repeating-linear-gradient(#9c9c9c 0 1px,transparent 1px 2px)"></div>
<div class="b " style="left:80.3px;top:161.4px;width:1.0px;height:7.1px;background:repeating-linear-gradient(#9c9c9c 0 1px,transparent 1px 2px)"></div>
<div class="b " style="left:52.0px;top:151.7px;width:1.0px;height:16.9px;background:repeating-linear-gradient(#9c9c9c 0 1px,transparent 1px 2px)"></div>
<div class="b " style="left:23.7px;top:151.7px;width:1.0px;height:16.9px;background:repeating-linear-gradient(#9c9c9c 0 1px,transparent 1px 2px)"></div>
<div class="b " style="left:80.3px;top:168.5px;width:1.0px;height:9.7px;background:repeating-linear-gradient(#9c9c9c 0 1px,transparent 1px 2px)"></div>
<div class="b " style="left:80.3px;top:178.3px;width:1.0px;height:7.1px;background:repeating-linear-gradient(#9c9c9c 0 1px,transparent 1px 2px)"></div>
<div class="b " style="left:52.0px;top:168.5px;width:1.0px;height:16.9px;background:repeating-linear-gradient(#9c9c9c 0 1px,transparent 1px 2px)"></div>
<div class="b " style="left:23.7px;top:168.5px;width:1.0px;height:16.9px;background:repeating-linear-gradient(#9c9c9c 0 1px,transparent 1px 2px)"></div>
<div class="b " style="left:80.3px;top:185.4px;width:1.0px;height:9.7px;background:repeating-linear-gradient(#9c9c9c 0 1px,transparent 1px 2px)"></div>
<div class="b " style="left:80.3px;top:195.2px;width:1.0px;height:7.1px;background:repeating-linear-gradient(#9c9c9c 0 1px,transparent 1px 2px)"></div>
<div class="b " style="left:52.0px;top:185.4px;width:1.0px;height:16.9px;background:repeating-linear-gradient(#9c9c9c 0 1px,transparent 1px 2px)"></div>
<div class="b " style="left:23.7px;top:185.4px;width:1.0px;height:16.9px;background:repeating-linear-gradient(#9c9c9c 0 1px,transparent 1px 2px)"></div>
<div class="b " style="left:80.3px;top:202.3px;width:1.0px;height:9.7px;background:repeating-linear-gradient(#9c9c9c 0 1px,transparent 1px 2px)"></div>
<div class="b " style="left:80.3px;top:212.1px;width:1.0px;height:7.1px;background:repeating-linear-gradient(#9c9c9c 0 1px,transparent 1px 2px)"></div>
<div class="b " style="left:52.0px;top:202.3px;width:1.0px;height:16.9px;background:repeating-linear-gradient(#9c9c9c 0 1px,transparent 1px 2px)"></div>
<div class="b " style="left:23.7px;top:202.3px;width:1.0px;height:16.9px;background:repeating-linear-gradient(#9c9c9c 0 1px,transparent 1px 2px)"></div>
<div class="b " style="left:80.3px;top:219.2px;width:1.0px;height:5.2px;background:repeating-linear-gradient(#9c9c9c 0 1px,transparent 1px 2px)"></div>
<div class="b " style="left:52.0px;top:219.2px;width:1.0px;height:16.9px;background:repeating-linear-gradient(#9c9c9c 0 1px,transparent 1px 2px)"></div>
<div class="b " style="left:23.7px;top:219.2px;width:1.0px;height:16.9px;background:repeating-linear-gradient(#9c9c9c 0 1px,transparent 1px 2px)"></div>
<div class="b " style="left:52.0px;top:236.1px;width:1.0px;height:5.2px;background:repeating-linear-gradient(#9c9c9c 0 1px,transparent 1px 2px)"></div>
<div class="b " style="left:52.0px;top:250.4px;width:1.0px;height:2.6px;background:repeating-linear-gradient(#9c9c9c 0 1px,transparent 1px 2px)"></div>
<div class="b " style="left:23.7px;top:236.1px;width:1.0px;height:16.9px;background:repeating-linear-gradient(#9c9c9c 0 1px,transparent 1px 2px)"></div>
<div class="b " style="left:52.0px;top:253.0px;width:1.0px;height:5.2px;background:repeating-linear-gradient(#9c9c9c 0 1px,transparent 1px 2px)"></div>
<div class="b " style="left:52.0px;top:267.3px;width:1.0px;height:2.6px;background:repeating-linear-gradient(#9c9c9c 0 1px,transparent 1px 2px)"></div>
<div class="b " style="left:23.7px;top:253.0px;width:1.0px;height:16.9px;background:repeating-linear-gradient(#9c9c9c 0 1px,transparent 1px 2px)"></div>
<div class="b " style="left:52.0px;top:269.9px;width:1.0px;height:5.2px;background:repeating-linear-gradient(#9c9c9c 0 1px,transparent 1px 2px)"></div>
<div class="b " style="left:52.0px;top:284.2px;width:1.0px;height:2.6px;background:repeating-linear-gradient(#9c9c9c 0 1px,transparent 1px 2px)"></div>
<div class="b " style="left:23.7px;top:269.9px;width:1.0px;height:16.9px;background:repeating-linear-gradient(#9c9c9c 0 1px,transparent 1px 2px)"></div>
<div class="b " style="left:52.0px;top:286.8px;width:1.0px;height:5.2px;background:repeating-linear-gradient(#9c9c9c 0 1px,transparent 1px 2px)"></div>
<div class="b " style="left:23.7px;top:286.8px;width:1.0px;height:16.9px;background:repeating-linear-gradient(#9c9c9c 0 1px,transparent 1px 2px)"></div>
<div class="b " style="left:23.7px;top:303.7px;width:1.0px;height:5.2px;background:repeating-linear-gradient(#9c9c9c 0 1px,transparent 1px 2px)"></div>
<div class="b " style="left:23.7px;top:318.0px;width:1.0px;height:2.6px;background:repeating-linear-gradient(#9c9c9c 0 1px,transparent 1px 2px)"></div>
<div class="b " style="left:37.8px;top:320.6px;width:1.0px;height:5.2px;background:repeating-linear-gradient(#9c9c9c 0 1px,transparent 1px 2px)"></div>
<div class="b " style="left:23.7px;top:320.6px;width:1.0px;height:16.9px;background:repeating-linear-gradient(#9c9c9c 0 1px,transparent 1px 2px)"></div>
<div class="b " style="left:23.7px;top:337.5px;width:1.0px;height:5.2px;background:repeating-linear-gradient(#9c9c9c 0 1px,transparent 1px 2px)"></div>
<div class="b " style="left:23.7px;top:351.7px;width:1.0px;height:2.6px;background:repeating-linear-gradient(#9c9c9c 0 1px,transparent 1px 2px)"></div>
<div class="b " style="left:23.7px;top:354.4px;width:1.0px;height:5.2px;background:repeating-linear-gradient(#9c9c9c 0 1px,transparent 1px 2px)"></div>
<div class="b " style="left:23.7px;top:368.6px;width:1.0px;height:2.6px;background:repeating-linear-gradient(#9c9c9c 0 1px,transparent 1px 2px)"></div>
<div class="b " style="left:23.7px;top:371.3px;width:1.0px;height:5.2px;background:repeating-linear-gradient(#9c9c9c 0 1px,transparent 1px 2px)"></div>
<div class="b " style="left:23.7px;top:385.5px;width:1.0px;height:2.6px;background:repeating-linear-gradient(#9c9c9c 0 1px,transparent 1px 2px)"></div>
<svg class="b" style="left:4.0px;top:3.0px;" width="12.0" height="14.0" viewBox="0 0 12 14"><rect x=".4" y=".5" width="11.2" height="13" rx="4.6" fill="#cde4f7"/><rect x="2.3" y="2.6" width="7.4" height="7.4" fill="#e4f1fb" stroke="#0a0af8" stroke-width="1"/><path d="M3.900 6.300h4.200" stroke="#333" stroke-width="1.300"/></svg>
<div class="b " style="left:15.0px;top:8.8px;width:5.0px;height:1.0px;background:repeating-linear-gradient(90deg,#9c9c9c 0 1px,transparent 1px 2px)"></div>
<svg class="b" style="left:19.5px;top:0.0px;" width="12.8" height="15.0" viewBox="0 0 14 16"><path d="M1 1.2h10.2q.8 0 .8.8V15H1z" fill="#fbe09a"/><path d="M10.6 8.6l2.6-1.6V15h-2.6z" fill="#f6d67e"/><path d="M1 14.2h12.2V15H1z" fill="#f0c968"/></svg>
<span class="t " style="left:35.0px;top:0.8px;width:230.0px;overflow:hidden;letter-spacing:-0.03px;">Program Files</span>
<span class="t " style="left:374.0px;top:0.8px;width:16.5px;text-align:right;">0</span>
<span class="t " style="left:414.0px;top:0.8px;width:39.5px;text-align:right;">0</span>
<span class="t " style="left:457.8px;top:0.8px;letter-spacing:0.20px;">H:\Progra...</span>
<span class="t " style="left:581.6px;top:0.8px;">MS-Shell</span>
<svg class="b" style="left:18.2px;top:19.9px;" width="12.0" height="14.0" viewBox="0 0 12 14"><rect x=".4" y=".5" width="11.2" height="13" rx="4.6" fill="#cde4f7"/><rect x="2.3" y="2.6" width="7.4" height="7.4" fill="#e4f1fb" stroke="#0a0af8" stroke-width="1"/><path d="M3.900 6.300h4.200" stroke="#333" stroke-width="1.300"/></svg>
<div class="b " style="left:29.2px;top:25.7px;width:5.0px;height:1.0px;background:repeating-linear-gradient(90deg,#9c9c9c 0 1px,transparent 1px 2px)"></div>
<svg class="b" style="left:33.7px;top:16.9px;" width="12.8" height="15.0" viewBox="0 0 14 16"><path d="M1 1.2h10.2q.8 0 .8.8V15H1z" fill="#fbe09a"/><path d="M10.6 8.6l2.6-1.6V15h-2.6z" fill="#f6d67e"/><path d="M1 14.2h12.2V15H1z" fill="#f0c968"/></svg>
<span class="t " style="left:49.2px;top:17.7px;width:215.8px;overflow:hidden;letter-spacing:0.07px;">WindowsPowerShell</span>
<span class="t " style="left:374.0px;top:17.7px;width:16.5px;text-align:right;">0</span>
<span class="t " style="left:414.0px;top:17.7px;width:39.5px;text-align:right;">1</span>
<span class="t " style="left:457.8px;top:17.7px;letter-spacing:0.20px;">H:\Progra...</span>
<span class="t " style="left:520.0px;top:17.7px;letter-spacing:0.06px;">&lt;Folder&gt;</span>
<span class="t " style="left:581.6px;top:17.7px;">MS-Shell</span>
<svg class="b" style="left:32.3px;top:36.8px;" width="12.0" height="14.0" viewBox="0 0 12 14"><rect x=".4" y=".5" width="11.2" height="13" rx="4.6" fill="#cde4f7"/><rect x="2.3" y="2.6" width="7.4" height="7.4" fill="#e4f1fb" stroke="#0a0af8" stroke-width="1"/><path d="M3.900 6.300h4.200" stroke="#333" stroke-width="1.300"/><path d="M6 4.200v4.200" stroke="#333" stroke-width="1.100"/></svg>
<div class="b " style="left:43.3px;top:42.6px;width:5.0px;height:1.0px;background:repeating-linear-gradient(90deg,#9c9c9c 0 1px,transparent 1px 2px)"></div>
<svg class="b" style="left:47.8px;top:33.8px;" width="12.8" height="15.0" viewBox="0 0 14 16"><path d="M1 1.2h10.2q.8 0 .8.8V15H1z" fill="#fbe09a"/><path d="M10.6 8.6l2.6-1.6V15h-2.6z" fill="#f6d67e"/><path d="M1 14.2h12.2V15H1z" fill="#f0c968"/></svg>
<span class="t " style="left:63.3px;top:34.6px;width:201.7px;overflow:hidden;letter-spacing:0.33px;">Configuration</span>
<span class="t " style="left:374.0px;top:34.6px;width:16.5px;text-align:right;">0</span>
<span class="t " style="left:414.0px;top:34.6px;width:39.5px;text-align:right;">2</span>
<span class="t " style="left:457.8px;top:34.6px;letter-spacing:0.20px;">H:\Progra...</span>
<span class="t " style="left:520.0px;top:34.6px;letter-spacing:0.06px;">&lt;Folder&gt;</span>
<span class="t " style="left:581.6px;top:34.6px;">MS-Shell</span>
<svg class="b" style="left:32.3px;top:53.7px;" width="12.0" height="14.0" viewBox="0 0 12 14"><rect x=".4" y=".5" width="11.2" height="13" rx="4.6" fill="#cde4f7"/><rect x="2.3" y="2.6" width="7.4" height="7.4" fill="#e4f1fb" stroke="#0a0af8" stroke-width="1"/><path d="M3.900 6.300h4.200" stroke="#333" stroke-width="1.300"/></svg>
<div class="b " style="left:43.3px;top:59.5px;width:5.0px;height:1.0px;background:repeating-linear-gradient(90deg,#9c9c9c 0 1px,transparent 1px 2px)"></div>
<svg class="b" style="left:47.8px;top:50.7px;" width="12.8" height="15.0" viewBox="0 0 14 16"><path d="M1 1.2h10.2q.8 0 .8.8V15H1z" fill="#fbe09a"/><path d="M10.6 8.6l2.6-1.6V15h-2.6z" fill="#f6d67e"/><path d="M1 14.2h12.2V15H1z" fill="#f0c968"/></svg>
<span class="t " style="left:63.3px;top:51.5px;width:201.7px;overflow:hidden;letter-spacing:0.37px;">Modules</span>
<span class="t " style="left:374.0px;top:51.5px;width:16.5px;text-align:right;">0</span>
<span class="t " style="left:414.0px;top:51.5px;width:39.5px;text-align:right;">3</span>
<span class="t " style="left:457.8px;top:51.5px;letter-spacing:0.20px;">H:\Progra...</span>
<span class="t " style="left:520.0px;top:51.5px;letter-spacing:0.06px;">&lt;Folder&gt;</span>
<span class="t " style="left:581.6px;top:51.5px;">MS-Shell</span>
<svg class="b" style="left:46.5px;top:70.6px;" width="12.0" height="14.0" viewBox="0 0 12 14"><rect x=".4" y=".5" width="11.2" height="13" rx="4.6" fill="#cde4f7"/><rect x="2.3" y="2.6" width="7.4" height="7.4" fill="#e4f1fb" stroke="#0a0af8" stroke-width="1"/><path d="M3.900 6.300h4.200" stroke="#333" stroke-width="1.300"/></svg>
<div class="b " style="left:57.5px;top:76.4px;width:5.0px;height:1.0px;background:repeating-linear-gradient(90deg,#9c9c9c 0 1px,transparent 1px 2px)"></div>
<svg class="b" style="left:62.0px;top:67.6px;" width="12.8" height="15.0" viewBox="0 0 14 16"><path d="M1 1.2h10.2q.8 0 .8.8V15H1z" fill="#fbe09a"/><path d="M10.6 8.6l2.6-1.6V15h-2.6z" fill="#f6d67e"/><path d="M1 14.2h12.2V15H1z" fill="#f0c968"/></svg>
<span class="t " style="left:77.5px;top:68.4px;width:187.5px;overflow:hidden;letter-spacing:0.08px;">Microsoft.PowerShell.Operation....</span>
<span class="t " style="left:374.0px;top:68.4px;width:16.5px;text-align:right;">0</span>
<span class="t " style="left:414.0px;top:68.4px;width:39.5px;text-align:right;">4</span>
<span class="t " style="left:457.8px;top:68.4px;letter-spacing:0.20px;">H:\Progra...</span>
<span class="t " style="left:520.0px;top:68.4px;letter-spacing:0.06px;">&lt;Folder&gt;</span>
<span class="t " style="left:581.6px;top:68.4px;">MS-Shell</span>
<svg class="b" style="left:60.7px;top:87.5px;" width="12.0" height="14.0" viewBox="0 0 12 14"><rect x=".4" y=".5" width="11.2" height="13" rx="4.6" fill="#cde4f7"/><rect x="2.3" y="2.6" width="7.4" height="7.4" fill="#e4f1fb" stroke="#0a0af8" stroke-width="1"/><path d="M3.900 6.300h4.200" stroke="#333" stroke-width="1.300"/></svg>
<div class="b " style="left:71.7px;top:93.3px;width:5.0px;height:1.0px;background:repeating-linear-gradient(90deg,#9c9c9c 0 1px,transparent 1px 2px)"></div>
<svg class="b" style="left:76.2px;top:84.5px;" width="12.8" height="15.0" viewBox="0 0 14 16"><path d="M1 1.2h10.2q.8 0 .8.8V15H1z" fill="#fbe09a"/><path d="M10.6 8.6l2.6-1.6V15h-2.6z" fill="#f6d67e"/><path d="M1 14.2h12.2V15H1z" fill="#f0c968"/></svg>
<span class="t " style="left:91.7px;top:85.3px;width:173.3px;overflow:hidden;">1.0.1</span>
<span class="t " style="left:374.0px;top:85.3px;width:16.5px;text-align:right;">0</span>
<span class="t " style="left:414.0px;top:85.3px;width:39.5px;text-align:right;">5</span>
<span class="t " style="left:457.8px;top:85.3px;letter-spacing:0.20px;">H:\Progra...</span>
<span class="t " style="left:520.0px;top:85.3px;letter-spacing:0.06px;">&lt;Folder&gt;</span>
<span class="t " style="left:581.6px;top:85.3px;">MS-Shell</span>
<svg class="b" style="left:74.8px;top:104.4px;" width="12.0" height="14.0" viewBox="0 0 12 14"><rect x=".4" y=".5" width="11.2" height="13" rx="4.6" fill="#cde4f7"/><rect x="2.3" y="2.6" width="7.4" height="7.4" fill="#e4f1fb" stroke="#0a0af8" stroke-width="1"/><path d="M3.900 6.300h4.200" stroke="#333" stroke-width="1.300"/></svg>
<div class="b " style="left:85.8px;top:110.2px;width:5.0px;height:1.0px;background:repeating-linear-gradient(90deg,#9c9c9c 0 1px,transparent 1px 2px)"></div>
<svg class="b" style="left:90.3px;top:101.4px;" width="12.8" height="15.0" viewBox="0 0 14 16"><path d="M1 1.2h10.2q.8 0 .8.8V15H1z" fill="#c9c7a4"/><path d="M10.6 8.6l2.6-1.6V15h-2.6z" fill="#b9b48a"/><path d="M1 14.2h12.2V15H1z" fill="#aaa57c"/></svg>
<span class="t w" style="left:105.8px;top:102.2px;width:159.2px;overflow:hidden;letter-spacing:0.07px;">Diagnostics</span>
<span class="t w" style="left:374.0px;top:102.2px;width:16.5px;text-align:right;">0</span>
<span class="t w" style="left:414.0px;top:102.2px;width:39.5px;text-align:right;">6</span>
<span class="t w" style="left:457.8px;top:102.2px;letter-spacing:0.20px;">H:\Progra...</span>
<span class="t w" style="left:520.0px;top:102.2px;letter-spacing:0.06px;">&lt;Folder&gt;</span>
<span class="t w" style="left:581.6px;top:102.2px;">MS-Shell</span>
<svg class="b" style="left:89.0px;top:121.3px;" width="12.0" height="14.0" viewBox="0 0 12 14"><rect x=".4" y=".5" width="11.2" height="13" rx="4.6" fill="#cde4f7"/><rect x="2.3" y="2.6" width="7.4" height="7.4" fill="#e4f1fb" stroke="#0a0af8" stroke-width="1"/><path d="M3.900 6.300h4.200" stroke="#333" stroke-width="1.300"/><path d="M6 4.200v4.200" stroke="#333" stroke-width="1.100"/></svg>
<div class="b " style="left:100.0px;top:127.1px;width:5.0px;height:1.0px;background:repeating-linear-gradient(90deg,#9c9c9c 0 1px,transparent 1px 2px)"></div>
<svg class="b" style="left:104.5px;top:118.3px;" width="12.8" height="15.0" viewBox="0 0 14 16"><path d="M1 1.2h10.2q.8 0 .8.8V15H1z" fill="#fbe09a"/><path d="M10.6 8.6l2.6-1.6V15h-2.6z" fill="#f6d67e"/><path d="M1 14.2h12.2V15H1z" fill="#f0c968"/></svg>
<span class="t " style="left:120.0px;top:119.1px;width:145.0px;overflow:hidden;">Comprehensive</span>
<span class="t " style="left:374.0px;top:119.1px;width:16.5px;text-align:right;">0</span>
<span class="t " style="left:414.0px;top:119.1px;width:39.5px;text-align:right;">7</span>
<span class="t " style="left:457.8px;top:119.1px;letter-spacing:0.20px;">H:\Progra...</span>
<span class="t " style="left:520.0px;top:119.1px;letter-spacing:0.06px;">&lt;Folder&gt;</span>
<span class="t " style="left:581.6px;top:119.1px;">MS-Shell</span>
<svg class="b" style="left:89.0px;top:138.2px;" width="12.0" height="14.0" viewBox="0 0 12 14"><rect x=".4" y=".5" width="11.2" height="13" rx="4.6" fill="#cde4f7"/><rect x="2.3" y="2.6" width="7.4" height="7.4" fill="#e4f1fb" stroke="#0a0af8" stroke-width="1"/><path d="M3.900 6.300h4.200" stroke="#333" stroke-width="1.300"/><path d="M6 4.200v4.200" stroke="#333" stroke-width="1.100"/></svg>
<div class="b " style="left:100.0px;top:144.0px;width:5.0px;height:1.0px;background:repeating-linear-gradient(90deg,#9c9c9c 0 1px,transparent 1px 2px)"></div>
<svg class="b" style="left:104.5px;top:135.2px;" width="12.8" height="15.0" viewBox="0 0 14 16"><path d="M1 1.2h10.2q.8 0 .8.8V15H1z" fill="#fbe09a"/><path d="M10.6 8.6l2.6-1.6V15h-2.6z" fill="#f6d67e"/><path d="M1 14.2h12.2V15H1z" fill="#f0c968"/></svg>
<span class="t " style="left:120.0px;top:136.0px;width:145.0px;overflow:hidden;">Simple</span>
<span class="t " style="left:374.0px;top:136.0px;width:16.5px;text-align:right;">0</span>
<span class="t " style="left:414.0px;top:136.0px;width:39.5px;text-align:right;">8</span>
<span class="t " style="left:457.8px;top:136.0px;letter-spacing:0.20px;">H:\Progra...</span>
<span class="t " style="left:520.0px;top:136.0px;letter-spacing:0.06px;">&lt;Folder&gt;</span>
<span class="t " style="left:581.6px;top:136.0px;">MS-Shell</span>
<div class="b " style="left:80.8px;top:160.9px;width:10.0px;height:1.0px;background:repeating-linear-gradient(90deg,#9c9c9c 0 1px,transparent 1px 2px)"></div>
<svg class="b" style="left:90.3px;top:153.1px;" width="13.5" height="14.0" viewBox="0 0 16 16"><path d="M2.500 1h8l3 3v11h-11z" fill="#fff" stroke="#7a7a7a" stroke-width="1"/><path d="M10.500 1v3h3" fill="#e4e4e4" stroke="#7a7a7a" stroke-width=".800"/><path d="M4.500 5.500h6.500M4.500 7.500h6.500M4.500 9.500h6.500M4.500 11.500h6.500" stroke="#7d7d7d" stroke-width="1"/><path d="M3 15.600h11V5" fill="none" stroke="#c8c8c8" stroke-width=".800"/></svg>
<span class="t " style="left:105.8px;top:152.9px;width:159.2px;overflow:hidden;letter-spacing:0.08px;">Microsoft.PowerShell.Operation....</span>
<span class="t " style="left:374.0px;top:152.9px;width:16.5px;text-align:right;">0</span>
<span class="t " style="left:414.0px;top:152.9px;width:39.5px;text-align:right;">9</span>
<span class="t " style="left:457.8px;top:152.9px;letter-spacing:0.20px;">H:\Progra...</span>
<span class="t " style="left:520.0px;top:152.9px;letter-spacing:-0.02px;">ps1xml</span>
<span class="t " style="left:581.6px;top:152.9px;">MS-Shell</span>
<div class="b " style="left:80.8px;top:177.8px;width:10.0px;height:1.0px;background:repeating-linear-gradient(90deg,#9c9c9c 0 1px,transparent 1px 2px)"></div>
<svg class="b" style="left:90.3px;top:170.0px;" width="13.5" height="14.0" viewBox="0 0 16 16"><path d="M4.800 2.800h10l-1.300 12.400H3.600z" fill="#b9bec4"/><path d="M3.500 2h10.300l-1.200 12.500H2.300z" fill="#8fc5ef" stroke="#5f9fd4" stroke-width=".700"/><path d="M4.800 4h7.600l-.9 9.300H4z" fill="#bcdcf6"/><path d="M4.200 1v2M6.100 1v2M8 1v2M9.900 1v2M11.800 1v2" stroke="#4f5660" stroke-width=".900"/></svg>
<span class="t " style="left:105.8px;top:169.8px;width:159.2px;overflow:hidden;letter-spacing:0.08px;">Microsoft.PowerShell.Operation....</span>
<span class="t " style="left:374.0px;top:169.8px;width:16.5px;text-align:right;">0</span>
<span class="t " style="left:414.0px;top:169.8px;width:39.5px;text-align:right;">10</span>
<span class="t " style="left:457.8px;top:169.8px;letter-spacing:0.20px;">H:\Progra...</span>
<span class="t " style="left:520.0px;top:169.8px;">psd1</span>
<span class="t " style="left:581.6px;top:169.8px;">MS-Shell</span>
<div class="b " style="left:80.8px;top:194.7px;width:10.0px;height:1.0px;background:repeating-linear-gradient(90deg,#9c9c9c 0 1px,transparent 1px 2px)"></div>
<svg class="b" style="left:90.3px;top:186.9px;" width="13.5" height="14.0" viewBox="0 0 16 16"><path d="M4.800 2.800h10l-1.300 12.400H3.600z" fill="#b9bec4"/><path d="M3.500 2h10.300l-1.200 12.500H2.300z" fill="#8fc5ef" stroke="#5f9fd4" stroke-width=".700"/><path d="M4.800 4h7.600l-.9 9.300H4z" fill="#bcdcf6"/><path d="M4.200 1v2M6.100 1v2M8 1v2M9.900 1v2M11.800 1v2" stroke="#4f5660" stroke-width=".900"/></svg>
<span class="t " style="left:105.8px;top:186.7px;width:159.2px;overflow:hidden;letter-spacing:0.08px;">Microsoft.PowerShell.Operation....</span>
<span class="t " style="left:374.0px;top:186.7px;width:16.5px;text-align:right;">0</span>
<span class="t " style="left:414.0px;top:186.7px;width:39.5px;text-align:right;">11</span>
<span class="t " style="left:457.8px;top:186.7px;letter-spacing:0.20px;">H:\Progra...</span>
<span class="t " style="left:520.0px;top:186.7px;">psm1</span>
<span class="t " style="left:581.6px;top:186.7px;">MS-Shell</span>
<div class="b " style="left:80.8px;top:211.6px;width:10.0px;height:1.0px;background:repeating-linear-gradient(90deg,#9c9c9c 0 1px,transparent 1px 2px)"></div>
<svg class="b" style="left:90.3px;top:203.8px;" width="13.5" height="14.0" viewBox="0 0 16 16"><path d="M4.800 2.800h10l-1.300 12.400H3.600z" fill="#b9bec4"/><path d="M3.500 2h10.300l-1.200 12.500H2.300z" fill="#8fc5ef" stroke="#5f9fd4" stroke-width=".700"/><path d="M4.800 4h7.600l-.9 9.300H4z" fill="#bcdcf6"/><path d="M4.200 1v2M6.100 1v2M8 1v2M9.900 1v2M11.800 1v2" stroke="#4f5660" stroke-width=".900"/></svg>
<span class="t " style="left:105.8px;top:203.6px;width:159.2px;overflow:hidden;letter-spacing:0.06px;">OperationValidationResources.p...</span>
<span class="t " style="left:374.0px;top:203.6px;width:16.5px;text-align:right;">0</span>
<span class="t " style="left:414.0px;top:203.6px;width:39.5px;text-align:right;">12</span>
<span class="t " style="left:457.8px;top:203.6px;letter-spacing:0.20px;">H:\Progra...</span>
<span class="t " style="left:520.0px;top:203.6px;">psd1</span>
<span class="t " style="left:581.6px;top:203.6px;">MS-Shell</span>
<svg class="b" style="left:74.8px;top:222.7px;" width="12.0" height="14.0" viewBox="0 0 12 14"><rect x=".4" y=".5" width="11.2" height="13" rx="4.6" fill="#cde4f7"/><rect x="2.3" y="2.6" width="7.4" height="7.4" fill="#e4f1fb" stroke="#0a0af8" stroke-width="1"/><path d="M3.900 6.300h4.200" stroke="#333" stroke-width="1.300"/><path d="M6 4.200v4.200" stroke="#333" stroke-width="1.100"/></svg>
<div class="b " style="left:85.8px;top:228.5px;width:5.0px;height:1.0px;background:repeating-linear-gradient(90deg,#9c9c9c 0 1px,transparent 1px 2px)"></div>
<svg class="b" style="left:90.3px;top:219.7px;" width="12.8" height="15.0" viewBox="0 0 14 16"><path d="M1 1.2h10.2q.8 0 .8.8V15H1z" fill="#fbe09a"/><path d="M10.6 8.6l2.6-1.6V15h-2.6z" fill="#f6d67e"/><path d="M1 14.2h12.2V15H1z" fill="#f0c968"/></svg>
<span class="t " style="left:105.8px;top:220.5px;width:159.2px;overflow:hidden;">Test</span>
<span class="t " style="left:374.0px;top:220.5px;width:16.5px;text-align:right;">0</span>
<span class="t " style="left:414.0px;top:220.5px;width:39.5px;text-align:right;">13</span>
<span class="t " style="left:457.8px;top:220.5px;letter-spacing:0.20px;">H:\Progra...</span>
<span class="t " style="left:520.0px;top:220.5px;letter-spacing:0.06px;">&lt;Folder&gt;</span>
<span class="t " style="left:581.6px;top:220.5px;">MS-Shell</span>
<svg class="b" style="left:46.5px;top:239.6px;" width="12.0" height="14.0" viewBox="0 0 12 14"><rect x=".4" y=".5" width="11.2" height="13" rx="4.6" fill="#cde4f7"/><rect x="2.3" y="2.6" width="7.4" height="7.4" fill="#e4f1fb" stroke="#0a0af8" stroke-width="1"/><path d="M3.900 6.300h4.200" stroke="#333" stroke-width="1.300"/><path d="M6 4.200v4.200" stroke="#333" stroke-width="1.100"/></svg>
<div class="b " style="left:57.5px;top:245.4px;width:5.0px;height:1.0px;background:repeating-linear-gradient(90deg,#9c9c9c 0 1px,transparent 1px 2px)"></div>
<svg class="b" style="left:62.0px;top:236.6px;" width="12.8" height="15.0" viewBox="0 0 14 16"><path d="M1 1.2h10.2q.8 0 .8.8V15H1z" fill="#fbe09a"/><path d="M10.6 8.6l2.6-1.6V15h-2.6z" fill="#f6d67e"/><path d="M1 14.2h12.2V15H1z" fill="#f0c968"/></svg>
<span class="t " style="left:77.5px;top:237.4px;width:187.5px;overflow:hidden;letter-spacing:0.09px;">PackageManagement</span>
<span class="t " style="left:374.0px;top:237.4px;width:16.5px;text-align:right;">0</span>
<span class="t " style="left:414.0px;top:237.4px;width:39.5px;text-align:right;">14</span>
<span class="t " style="left:457.8px;top:237.4px;letter-spacing:0.20px;">H:\Progra...</span>
<span class="t " style="left:520.0px;top:237.4px;letter-spacing:0.06px;">&lt;Folder&gt;</span>
<span class="t " style="left:581.6px;top:237.4px;">MS-Shell</span>
<svg class="b" style="left:46.5px;top:256.5px;" width="12.0" height="14.0" viewBox="0 0 12 14"><rect x=".4" y=".5" width="11.2" height="13" rx="4.6" fill="#cde4f7"/><rect x="2.3" y="2.6" width="7.4" height="7.4" fill="#e4f1fb" stroke="#0a0af8" stroke-width="1"/><path d="M3.900 6.300h4.200" stroke="#333" stroke-width="1.300"/><path d="M6 4.200v4.200" stroke="#333" stroke-width="1.100"/></svg>
<div class="b " style="left:57.5px;top:262.3px;width:5.0px;height:1.0px;background:repeating-linear-gradient(90deg,#9c9c9c 0 1px,transparent 1px 2px)"></div>
<svg class="b" style="left:62.0px;top:253.5px;" width="12.8" height="15.0" viewBox="0 0 14 16"><path d="M1 1.2h10.2q.8 0 .8.8V15H1z" fill="#fbe09a"/><path d="M10.6 8.6l2.6-1.6V15h-2.6z" fill="#f6d67e"/><path d="M1 14.2h12.2V15H1z" fill="#f0c968"/></svg>
<span class="t " style="left:77.5px;top:254.3px;width:187.5px;overflow:hidden;letter-spacing:-0.19px;">Pester</span>
<span class="t " style="left:374.0px;top:254.3px;width:16.5px;text-align:right;">0</span>
<span class="t " style="left:414.0px;top:254.3px;width:39.5px;text-align:right;">15</span>
<span class="t " style="left:457.8px;top:254.3px;letter-spacing:0.20px;">H:\Progra...</span>
<span class="t " style="left:520.0px;top:254.3px;letter-spacing:0.06px;">&lt;Folder&gt;</span>
<span class="t " style="left:581.6px;top:254.3px;">MS-Shell</span>
<svg class="b" style="left:46.5px;top:273.4px;" width="12.0" height="14.0" viewBox="0 0 12 14"><rect x=".4" y=".5" width="11.2" height="13" rx="4.6" fill="#cde4f7"/><rect x="2.3" y="2.6" width="7.4" height="7.4" fill="#e4f1fb" stroke="#0a0af8" stroke-width="1"/><path d="M3.900 6.300h4.200" stroke="#333" stroke-width="1.300"/><path d="M6 4.200v4.200" stroke="#333" stroke-width="1.100"/></svg>
<div class="b " style="left:57.5px;top:279.2px;width:5.0px;height:1.0px;background:repeating-linear-gradient(90deg,#9c9c9c 0 1px,transparent 1px 2px)"></div>
<svg class="b" style="left:62.0px;top:270.4px;" width="12.8" height="15.0" viewBox="0 0 14 16"><path d="M1 1.2h10.2q.8 0 .8.8V15H1z" fill="#fbe09a"/><path d="M10.6 8.6l2.6-1.6V15h-2.6z" fill="#f6d67e"/><path d="M1 14.2h12.2V15H1z" fill="#f0c968"/></svg>
<span class="t " style="left:77.5px;top:271.2px;width:187.5px;overflow:hidden;letter-spacing:-0.13px;">PowerShellGet</span>
<span class="t " style="left:374.0px;top:271.2px;width:16.5px;text-align:right;">0</span>
<span class="t " style="left:414.0px;top:271.2px;width:39.5px;text-align:right;">16</span>
<span class="t " style="left:457.8px;top:271.2px;letter-spacing:0.20px;">H:\Progra...</span>
<span class="t " style="left:520.0px;top:271.2px;letter-spacing:0.06px;">&lt;Folder&gt;</span>
<span class="t " style="left:581.6px;top:271.2px;">MS-Shell</span>
<svg class="b" style="left:46.5px;top:290.3px;" width="12.0" height="14.0" viewBox="0 0 12 14"><rect x=".4" y=".5" width="11.2" height="13" rx="4.6" fill="#cde4f7"/><rect x="2.3" y="2.6" width="7.4" height="7.4" fill="#e4f1fb" stroke="#0a0af8" stroke-width="1"/><path d="M3.900 6.300h4.200" stroke="#333" stroke-width="1.300"/><path d="M6 4.200v4.200" stroke="#333" stroke-width="1.100"/></svg>
<div class="b " style="left:57.5px;top:296.1px;width:5.0px;height:1.0px;background:repeating-linear-gradient(90deg,#9c9c9c 0 1px,transparent 1px 2px)"></div>
<svg class="b" style="left:62.0px;top:287.3px;" width="12.8" height="15.0" viewBox="0 0 14 16"><path d="M1 1.2h10.2q.8 0 .8.8V15H1z" fill="#fbe09a"/><path d="M10.6 8.6l2.6-1.6V15h-2.6z" fill="#f6d67e"/><path d="M1 14.2h12.2V15H1z" fill="#f0c968"/></svg>
<span class="t " style="left:77.5px;top:288.1px;width:187.5px;overflow:hidden;letter-spacing:-0.34px;">PSReadline</span>
<span class="t " style="left:374.0px;top:288.1px;width:16.5px;text-align:right;">0</span>
<span class="t " style="left:414.0px;top:288.1px;width:39.5px;text-align:right;">17</span>
<span class="t " style="left:457.8px;top:288.1px;letter-spacing:0.20px;">H:\Progra...</span>
<span class="t " style="left:520.0px;top:288.1px;letter-spacing:0.06px;">&lt;Folder&gt;</span>
<span class="t " style="left:581.6px;top:288.1px;">MS-Shell</span>
<svg class="b" style="left:18.2px;top:307.2px;" width="12.0" height="14.0" viewBox="0 0 12 14"><rect x=".4" y=".5" width="11.2" height="13" rx="4.6" fill="#cde4f7"/><rect x="2.3" y="2.6" width="7.4" height="7.4" fill="#e4f1fb" stroke="#0a0af8" stroke-width="1"/><path d="M3.900 6.300h4.200" stroke="#333" stroke-width="1.300"/></svg>
<div class="b " style="left:29.2px;top:313.0px;width:5.0px;height:1.0px;background:repeating-linear-gradient(90deg,#9c9c9c 0 1px,transparent 1px 2px)"></div>
<svg class="b" style="left:33.7px;top:304.2px;" width="12.8" height="15.0" viewBox="0 0 14 16"><path d="M1 1.2h10.2q.8 0 .8.8V15H1z" fill="#fbe09a"/><path d="M10.6 8.6l2.6-1.6V15h-2.6z" fill="#f6d67e"/><path d="M1 14.2h12.2V15H1z" fill="#f0c968"/></svg>
<span class="t " style="left:49.2px;top:305.0px;width:215.8px;overflow:hidden;letter-spacing:0.10px;">Windows Security</span>
<span class="t " style="left:374.0px;top:305.0px;width:16.5px;text-align:right;">0</span>
<span class="t " style="left:414.0px;top:305.0px;width:39.5px;text-align:right;">18</span>
<span class="t " style="left:457.8px;top:305.0px;letter-spacing:0.20px;">H:\Progra...</span>
<span class="t " style="left:520.0px;top:305.0px;letter-spacing:0.06px;">&lt;Folder&gt;</span>
<span class="t " style="left:581.6px;top:305.0px;">MS-Shell</span>
<svg class="b" style="left:32.3px;top:324.1px;" width="12.0" height="14.0" viewBox="0 0 12 14"><rect x=".4" y=".5" width="11.2" height="13" rx="4.6" fill="#cde4f7"/><rect x="2.3" y="2.6" width="7.4" height="7.4" fill="#e4f1fb" stroke="#0a0af8" stroke-width="1"/><path d="M3.900 6.300h4.200" stroke="#333" stroke-width="1.300"/><path d="M6 4.200v4.200" stroke="#333" stroke-width="1.100"/></svg>
<div class="b " style="left:43.3px;top:329.9px;width:5.0px;height:1.0px;background:repeating-linear-gradient(90deg,#9c9c9c 0 1px,transparent 1px 2px)"></div>
<svg class="b" style="left:47.8px;top:321.1px;" width="12.8" height="15.0" viewBox="0 0 14 16"><path d="M1 1.2h10.2q.8 0 .8.8V15H1z" fill="#fbe09a"/><path d="M10.6 8.6l2.6-1.6V15h-2.6z" fill="#f6d67e"/><path d="M1 14.2h12.2V15H1z" fill="#f0c968"/></svg>
<span class="t " style="left:63.3px;top:321.9px;width:201.7px;overflow:hidden;">BrowserCore</span>
<span class="t " style="left:374.0px;top:321.9px;width:16.5px;text-align:right;">0</span>
<span class="t " style="left:414.0px;top:321.9px;width:39.5px;text-align:right;">19</span>
<span class="t " style="left:457.8px;top:321.9px;letter-spacing:0.20px;">H:\Progra...</span>
<span class="t " style="left:520.0px;top:321.9px;letter-spacing:0.06px;">&lt;Folder&gt;</span>
<span class="t " style="left:581.6px;top:321.9px;">MS-Shell</span>
<svg class="b" style="left:18.2px;top:340.9px;" width="12.0" height="14.0" viewBox="0 0 12 14"><rect x=".4" y=".5" width="11.2" height="13" rx="4.6" fill="#cde4f7"/><rect x="2.3" y="2.6" width="7.4" height="7.4" fill="#e4f1fb" stroke="#0a0af8" stroke-width="1"/><path d="M3.900 6.300h4.200" stroke="#333" stroke-width="1.300"/><path d="M6 4.200v4.200" stroke="#333" stroke-width="1.100"/></svg>
<div class="b " style="left:29.2px;top:346.7px;width:5.0px;height:1.0px;background:repeating-linear-gradient(90deg,#9c9c9c 0 1px,transparent 1px 2px)"></div>
<svg class="b" style="left:33.7px;top:337.9px;" width="12.8" height="15.0" viewBox="0 0 14 16"><path d="M1 1.2h10.2q.8 0 .8.8V15H1z" fill="#fbe09a"/><path d="M10.6 8.6l2.6-1.6V15h-2.6z" fill="#f6d67e"/><path d="M1 14.2h12.2V15H1z" fill="#f0c968"/></svg>
<span class="t " style="left:49.2px;top:338.7px;width:215.8px;overflow:hidden;letter-spacing:0.02px;">Windows Portable Devices</span>
<span class="t " style="left:374.0px;top:338.7px;width:16.5px;text-align:right;">0</span>
<span class="t " style="left:414.0px;top:338.7px;width:39.5px;text-align:right;">20</span>
<span class="t " style="left:457.8px;top:338.7px;letter-spacing:0.20px;">H:\Progra...</span>
<span class="t " style="left:520.0px;top:338.7px;letter-spacing:0.06px;">&lt;Folder&gt;</span>
<span class="t " style="left:581.6px;top:338.7px;">MS-Shell</span>
<svg class="b" style="left:18.2px;top:357.8px;" width="12.0" height="14.0" viewBox="0 0 12 14"><rect x=".4" y=".5" width="11.2" height="13" rx="4.6" fill="#cde4f7"/><rect x="2.3" y="2.6" width="7.4" height="7.4" fill="#e4f1fb" stroke="#0a0af8" stroke-width="1"/><path d="M3.900 6.300h4.200" stroke="#333" stroke-width="1.300"/><path d="M6 4.200v4.200" stroke="#333" stroke-width="1.100"/></svg>
<div class="b " style="left:29.2px;top:363.6px;width:5.0px;height:1.0px;background:repeating-linear-gradient(90deg,#9c9c9c 0 1px,transparent 1px 2px)"></div>
<svg class="b" style="left:33.7px;top:354.8px;" width="12.8" height="15.0" viewBox="0 0 14 16"><path d="M1 1.2h10.2q.8 0 .8.8V15H1z" fill="#fbe09a"/><path d="M10.6 8.6l2.6-1.6V15h-2.6z" fill="#f6d67e"/><path d="M1 14.2h12.2V15H1z" fill="#f0c968"/></svg>
<span class="t " style="left:49.2px;top:355.6px;width:215.8px;overflow:hidden;letter-spacing:0.13px;">Windows Photo Viewer</span>
<span class="t " style="left:374.0px;top:355.6px;width:16.5px;text-align:right;">0</span>
<span class="t " style="left:414.0px;top:355.6px;width:39.5px;text-align:right;">21</span>
<span class="t " style="left:457.8px;top:355.6px;letter-spacing:0.20px;">H:\Progra...</span>
<span class="t " style="left:520.0px;top:355.6px;letter-spacing:0.06px;">&lt;Folder&gt;</span>
<span class="t " style="left:581.6px;top:355.6px;">MS-Shell</span>
<svg class="b" style="left:18.2px;top:374.7px;" width="12.0" height="14.0" viewBox="0 0 12 14"><rect x=".4" y=".5" width="11.2" height="13" rx="4.6" fill="#cde4f7"/><rect x="2.3" y="2.6" width="7.4" height="7.4" fill="#e4f1fb" stroke="#0a0af8" stroke-width="1"/><path d="M3.900 6.300h4.200" stroke="#333" stroke-width="1.300"/><path d="M6 4.200v4.200" stroke="#333" stroke-width="1.100"/></svg>
<div class="b " style="left:29.2px;top:380.5px;width:5.0px;height:1.0px;background:repeating-linear-gradient(90deg,#9c9c9c 0 1px,transparent 1px 2px)"></div>
<svg class="b" style="left:33.7px;top:371.7px;" width="12.8" height="15.0" viewBox="0 0 14 16"><path d="M1 1.2h10.2q.8 0 .8.8V15H1z" fill="#fbe09a"/><path d="M10.6 8.6l2.6-1.6V15h-2.6z" fill="#f6d67e"/><path d="M1 14.2h12.2V15H1z" fill="#f0c968"/></svg>
<span class="t " style="left:49.2px;top:372.5px;width:215.8px;overflow:hidden;">windows nt</span>
<span class="t " style="left:374.0px;top:372.5px;width:16.5px;text-align:right;">0</span>
<span class="t " style="left:414.0px;top:372.5px;width:39.5px;text-align:right;">22</span>
<span class="t " style="left:457.8px;top:372.5px;letter-spacing:0.20px;">H:\Progra...</span>
<span class="t " style="left:520.0px;top:372.5px;letter-spacing:0.06px;">&lt;Folder&gt;</span>
<span class="t " style="left:581.6px;top:372.5px;">MS-Shell</span>
</div>
<div class="b " style="left:665.0px;top:122.6px;width:15.3px;height:401.4px;background:#f0f0f0"></div>
<svg class="b" style="left:668.0px;top:128.8px;" width="7.0" height="4.6" viewBox="0 0 8 5"><path d="M.6 4.400L4 1 7.400 4.400" fill="none" stroke="#505050" stroke-width="1.900"/></svg>
<svg class="b" style="left:668.0px;top:513.3px;" width="7.0" height="4.6" viewBox="0 0 8 5"><path d="M.6.600L4 4l3.400-3.400" fill="none" stroke="#505050" stroke-width="1.900"/></svg>
<div class="b " style="left:665.2px;top:138.6px;width:13.0px;height:156.0px;background:#cdcdcd"></div>
<div class="b " style="left:26.0px;top:524.0px;width:654.3px;height:15.3px;background:#f0f0f0"></div>
<div class="b " style="left:42.0px;top:525.0px;width:95.0px;height:13.2px;background:#cdcdcd"></div>
<svg class="b" style="left:31.5px;top:527.3px;" width="4.8" height="7.5" viewBox="0 0 5 8"><path d="M4.400.600L1 4l3.400 3.400" fill="none" stroke="#505050" stroke-width="1.900"/></svg>
<svg class="b" style="left:654.5px;top:527.3px;" width="4.8" height="7.5" viewBox="0 0 5 8"><path d="M.6.600L4 4 .600 7.400" fill="none" stroke="#505050" stroke-width="1.900"/></svg>
<div class="b " style="left:16.0px;top:541.7px;width:666.0px;height:20.5px;background:#f0f0f0"></div>
<svg class="b" style="left:670.0px;top:551.0px;" width="10.0" height="10.0" viewBox="0 0 10 10"><g fill="#b8b8b8"><rect x="7.500" y="1.500" width="1.500" height="1.500"/><rect x="4.500" y="4.500" width="1.500" height="1.500"/><rect x="7.500" y="4.500" width="1.500" height="1.500"/><rect x="1.500" y="7.500" width="1.500" height="1.500"/><rect x="4.500" y="7.500" width="1.500" height="1.500"/><rect x="7.500" y="7.500" width="1.500" height="1.500"/></g></svg>
<div class="b " style="left:215.8px;top:115.0px;width:185.2px;height:217.3px;background:#f0f0f0;border:1px solid #c6c6c6;box-shadow:2px 2px 3px rgba(0,0,0,.45)"></div>
<div class="b " style="left:219.3px;top:118.2px;width:16.9px;height:17.0px;background:#e8f0f9;border:1px solid #3f92e2"></div>
<svg class="b" style="left:223.3px;top:123.3px;" width="8.0" height="7.0" viewBox="0 0 8 7"><path d="M.8 3.200L3.100 5.500 7.200 1.200" fill="none" stroke="#111" stroke-width="1.900"/></svg>
<span class="t " style="left:240.7px;top:118.9px;letter-spacing:0.12px;">OK-Columns + MS-Shell</span>
<span class="t " style="left:240.7px;top:136.9px;letter-spacing:0.14px;">OK-Columns + MP3-Header</span>
<div class="b " style="left:218.5px;top:157.7px;width:180.5px;height:1.2px;background:#bdbdbd"></div>
<svg class="b" style="left:220.5px;top:164.0px;" width="14.0" height="14.0" viewBox="0 0 16 16"><path d="M1 4h5l1 1.2h6V9H1z" fill="#e8c84a" stroke="#333" stroke-width=".8"/><path d="M1 12l2.2-5H15.5L13 12z" fill="#ffe680" stroke="#333" stroke-width=".8"/><path d="M9 1.5q3-1 4.5 1.5l1-.6-.4 3-2.8-1 1-.6Q11.500 2 9 2.600z" fill="#333"/><rect x="1" y="12.300" width="12" height="3" fill="#e01010"/><path d="M1 13.800h12" stroke="#400" stroke-width=".7" stroke-dasharray="1.500 1"/></svg>
<span class="t " style="left:240.7px;top:163.5px;">Load</span>
<svg class="b" style="left:390.0px;top:167.5px;" width="3.5" height="6.0" viewBox="0 0 3.500 6"><path d="M0 0l3.500 3L0 6z" fill="#111"/></svg>
<svg class="b" style="left:221.0px;top:182.0px;" width="13.5" height="13.5" viewBox="0 0 16 16"><rect x="1.2" y="1.2" width="13" height="10" fill="#e8e0c0" stroke="#333" stroke-width="1"/><rect x="3" y="3" width="9.400" height="6.400" fill="#fff" stroke="#666" stroke-width=".6"/><rect x="1" y="12" width="13.500" height="3.200" fill="#e01010"/><path d="M1 13.600h13.500" stroke="#400" stroke-width=".7" stroke-dasharray="1.500 1"/></svg>
<span class="t " style="left:240.7px;top:181.5px;">Save</span>
<div class="b " style="left:218.5px;top:202.7px;width:180.5px;height:1.2px;background:#bdbdbd"></div>
<div class="b " style="left:219.3px;top:207.2px;width:16.9px;height:17.0px;background:#e8f0f9;border:1px solid #3f92e2"></div>
<svg class="b" style="left:223.3px;top:212.3px;" width="8.0" height="7.0" viewBox="0 0 8 7"><path d="M.8 3.200L3.100 5.500 7.200 1.200" fill="none" stroke="#111" stroke-width="1.900"/></svg>
<span class="t " style="left:240.7px;top:208.1px;letter-spacing:0.02px;">Show grid lines</span>
<svg class="b" style="left:220.5px;top:226.0px;" width="14.0" height="14.0" viewBox="0 0 16 16"><path d="M2 1l12 9.500M14 1L2 10.500" stroke="#d00c0c" stroke-width="2.400"/><text x="8" y="15.600" text-anchor="middle" font-family="Liberation Sans, sans-serif" font-size="7" fill="#111">port</text></svg>
<span class="t " style="left:240.7px;top:226.0px;">Export</span>
<div class="b " style="left:218.5px;top:246.7px;width:180.5px;height:1.2px;background:#bdbdbd"></div>
<span class="t " style="left:240.7px;top:252.8px;letter-spacing:-0.11px;">Reload Details</span>
<div class="b " style="left:218.5px;top:272.7px;width:180.5px;height:1.2px;background:#bdbdbd"></div>
<div class="b " style="left:218.3px;top:278.3px;width:181.0px;height:16.8px;background:#2f93ec"></div>
<svg class="b" style="left:220.5px;top:280.0px;" width="14.0" height="14.0" viewBox="0 0 16 16"><path d="M1 6l3.500-3v2h7v-2l3.500 3-3.500 3V7h-7v2z" fill="#d01010" stroke="#500" stroke-width=".5"/><path d="M5 2.500h6" stroke="#222" stroke-width="1"/><rect x="1" y="10.800" width="14" height="4" fill="#e01010"/><path d="M1 12.800h14" stroke="#400" stroke-width=".8" stroke-dasharray="1.500 1"/></svg>
<span class="t w" style="left:240.7px;top:279.4px;letter-spacing:0.08px;">Auto arange + Heeder</span>
<svg class="b" style="left:220.5px;top:297.5px;" width="14.0" height="14.0" viewBox="0 0 16 16"><path d="M.8 8l4-3.600v2.400h6.400V4.400l4 3.600-4 3.600V9.200H4.800v2.400z" fill="#e01010" stroke="#600" stroke-width=".5"/></svg>
<span class="t " style="left:240.7px;top:297.1px;letter-spacing:0.12px;">Auto arange</span>
<svg class="b" style="left:220.5px;top:314.5px;" width="14.0" height="14.0" viewBox="0 0 16 16"><path d="M3 3l9 8" stroke="#222" stroke-width="2.200"/><path d="M11 1l.5 2M13.500 2.500L12.500 4M14.500 5l-1.700.3" stroke="#333" stroke-width=".8"/><rect x="1" y="12" width="13" height="3" fill="#e01010"/><path d="M1 13.500h13" stroke="#400" stroke-width=".7" stroke-dasharray="1.500 1"/></svg>
<span class="t " style="left:240.7px;top:314.8px;letter-spacing:0.13px;">Customize Columns</span>
<span class="t " style="left:356.7px;top:314.8px;">[341]</span>
</body></html>
